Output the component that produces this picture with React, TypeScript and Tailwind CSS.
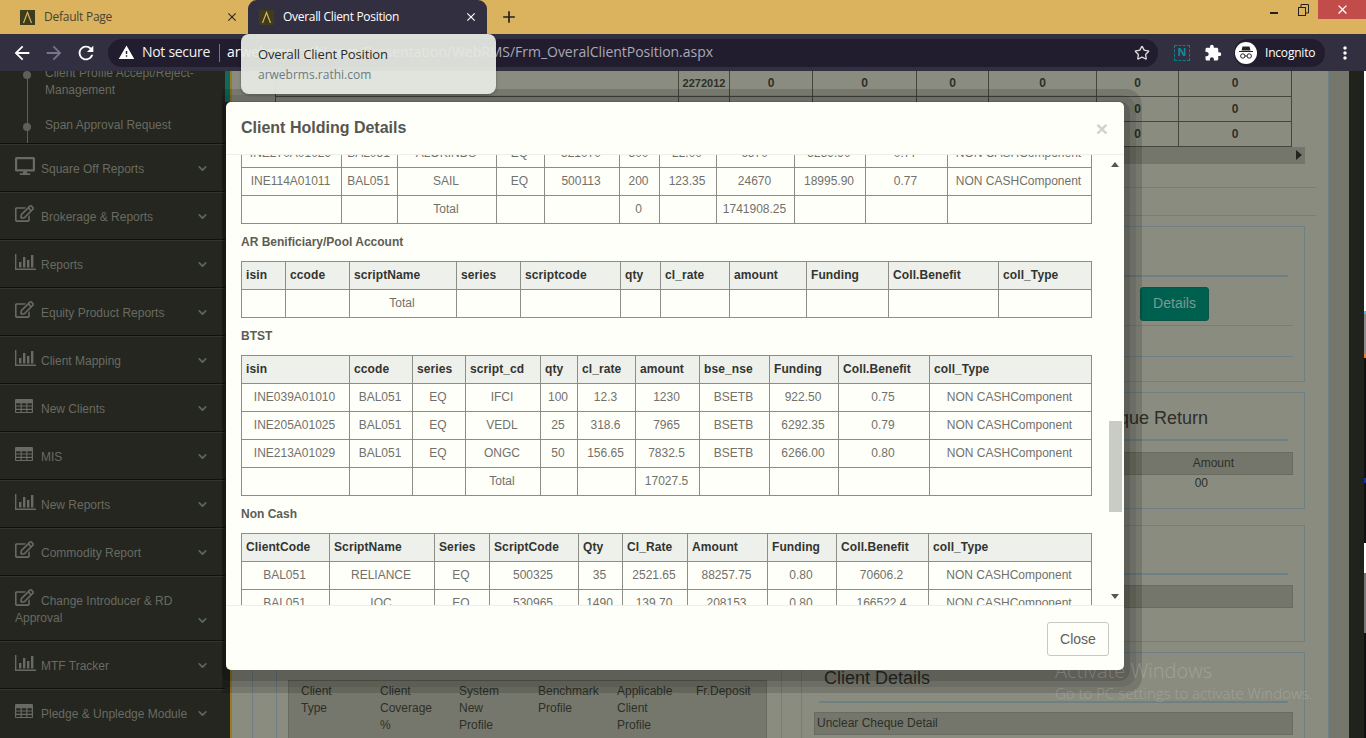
import type { ReactNode } from 'react';
import { ChevronDown, Star } from 'lucide-react';
import { FaDesktop, FaRegEdit } from 'react-icons/fa';
import { MdAdd, MdArrowBack, MdArrowForward, MdClose, MdExtension, MdMoreVert, MdRefresh, MdWarning } from 'react-icons/md';

const NC = 'NON CASHComponent';

const tables = [
  {
    cols: [100, 56, 99, 48, 75, 40, 57, 78, 71, 82, 144],
    head: [],
    rows: [
      ['INE270A01029', 'BAL051', 'ALOKINDS', 'EQ', '521070', '300', '22.00', '6570', '5289.90', '0.77', NC],
      ['INE114A01011', 'BAL051', 'SAIL', 'EQ', '500113', '200', '123.35', '24670', '18995.90', '0.77', NC],
      ['', '', 'Total', '', '', '0', '', '1741908.25', '', '', ''],
    ],
  },
  {
    title: 'AR Benificiary/Pool Account',
    cols: [44, 64, 107, 64, 100, 40, 69, 77, 82, 110, 93],
    head: ['isin', 'ccode', 'scriptName', 'series', 'scriptcode', 'qty', 'cl_rate', 'amount', 'Funding', 'Coll.Benefit', 'coll_Type'],
    rows: [['', '', 'Total', '', '', '', '', '', '', '', '']],
  },
  {
    title: 'BTST',
    cols: [108, 63, 53, 75, 37, 58, 64, 70, 69, 91, 162],
    head: ['isin', 'ccode', 'series', 'script_cd', 'qty', 'cl_rate', 'amount', 'bse_nse', 'Funding', 'Coll.Benefit', 'coll_Type'],
    rows: [
      ['INE039A01010', 'BAL051', 'EQ', 'IFCI', '100', '12.3', '1230', 'BSETB', '922.50', '0.75', NC],
      ['INE205A01025', 'BAL051', 'EQ', 'VEDL', '25', '318.6', '7965', 'BSETB', '6292.35', '0.79', NC],
      ['INE213A01029', 'BAL051', 'EQ', 'ONGC', '50', '156.65', '7832.5', 'BSETB', '6266.00', '0.80', NC],
      ['', '', '', 'Total', '', '', '17027.5', '', '', '', ''],
    ],
  },
  {
    title: 'Non Cash',
    cols: [88, 105, 55, 89, 44, 65, 80, 69, 92, 163],
    head: ['ClientCode', 'ScriptName', 'Series', 'ScriptCode', 'Qty', 'Cl_Rate', 'Amount', 'Funding', 'Coll.Benefit', 'coll_Type'],
    rows: [
      ['BAL051', 'RELIANCE', 'EQ', '500325', '35', '2521.65', '88257.75', '0.80', '70606.2', NC],
      ['BAL051', 'IOC', 'EQ', '530965', '1490', '139.70', '208153', '0.80', '166522.4', NC],
    ],
  },
];

function BarsIcon() {
  return (
    <svg width="21" height="16" viewBox="0 0 21 16" fill="currentColor">
      <path d="M0 0h1.4v14.6H21V16H0z" />
      <rect x="4" y="8" width="2.4" height="5.5" />
      <rect x="8" y="3" width="2.4" height="10.5" />
      <rect x="12" y="6" width="2.4" height="7.5" />
      <rect x="16" y="1" width="2.4" height="12.5" />
    </svg>
  );
}

function GridIcon() {
  return (
    <svg width="18" height="14" viewBox="0 0 18 14" fill="currentColor">
      <path
        fillRule="evenodd"
        d="M1 0h16a1 1 0 0 1 1 1v12a1 1 0 0 1-1 1H1a1 1 0 0 1-1-1V1a1 1 0 0 1 1-1zM1.2 4.2v2.3h4.4V4.2zm5.6 0v2.3h4.4V4.2zm5.6 0v2.3h4.4V4.2zM1.2 7.6v2.2h4.4V7.6zm5.6 0v2.2h4.4V7.6zm5.6 0v2.2h4.4V7.6zM1.2 10.9v2h4.4v-2zm5.6 0v2h4.4v-2zm5.6 0v2h4.4v-2z"
      />
    </svg>
  );
}

const menu = [
  { label: 'Square Off Reports', icon: <FaDesktop size={20} /> },
  { label: 'Brokerage & Reports', icon: <FaRegEdit size={19} /> },
  { label: 'Reports', icon: <BarsIcon /> },
  { label: 'Equity Product Reports', icon: <FaRegEdit size={19} /> },
  { label: 'Client Mapping', icon: <BarsIcon /> },
  { label: 'New Clients', icon: <GridIcon /> },
  { label: 'MIS', icon: <GridIcon /> },
  { label: 'New Reports', icon: <BarsIcon /> },
  { label: 'Commodity Report', icon: <FaRegEdit size={19} /> },
  { label: 'Change Introducer & RD', more: 'Approval', icon: <FaRegEdit size={19} /> },
  { label: 'MTF Tracker', icon: <BarsIcon /> },
  { label: 'Pledge & Unpledge Module', icon: <GridIcon /> },
];

function Logo() {
  return (
    <svg width="15" height="15" viewBox="0 0 15 15" className="shrink-0">
      <rect width="15" height="15" fill="#3d3c1c" />
      <path d="M3.5 13 7.5 2.5 11.5 13" fill="none" stroke="#d9b25c" strokeWidth="1.2" />
    </svg>
  );
}

function BrowserBar() {
  return (
    <>
      <div className="flex h-[34px] items-start bg-[#dbb25e] pl-[20px]">
        <div className="flex h-[34px] w-[228px] items-center pr-[9px]">
          <Logo />
          <span className="ml-[9px] text-[12px] tracking-[-0.25px] text-[#4a4430]">Default Page</span>
          <MdClose size={14} className="ml-auto text-[#2b2b2b]" />
        </div>
        <div className="flex h-[34px] w-[239px] items-center rounded-t-[9px] bg-[#322f40] pl-[11px] pr-[9px]">
          <Logo />
          <span className="ml-[9px] text-[12px] tracking-[-0.3px] text-white">Overall Client Position</span>
          <MdClose size={14} className="ml-auto text-white" />
        </div>
        <MdAdd size={20} className="ml-[12px] mt-[7px] text-[#222]" />
        <div className="ml-auto flex items-start">
          <div className="mt-[12px] h-[2px] w-[8px] bg-[#222]" />
          <svg width="11" height="12" viewBox="0 0 11 12" fill="none" stroke="#222" className="ml-[20px] mt-[4px]">
            <rect x="0.5" y="3.5" width="7" height="8" />
            <path d="M3 3V.5h7.5V9H8" />
          </svg>
          <div className="ml-[9px] flex h-[19px] w-[48px] items-center justify-center bg-[#c14c4a]">
            <MdClose size={15} className="text-white" />
          </div>
        </div>
      </div>
      <div className="flex h-[37px] items-center bg-[#322f40] pl-[11px]">
        <MdArrowBack size={22} className="text-white" />
        <MdArrowForward size={22} className="ml-[10px] text-[#77758a]" />
        <MdRefresh size={22} className="ml-[10px] text-white" />
        <div className="ml-[11px] flex h-[28px] w-[1050px] items-center rounded-full bg-[#211d2f] pl-[10px]">
          <MdWarning size={17} className="text-white" />
          <span className="ml-[7px] pb-[2px] text-[14px] tracking-[-0.3px] text-[#f0f0f0]">Not secure</span>
          <div className="ml-[9px] h-[18px] w-px bg-[#77758a]" />
          <span className="ml-[7px] pb-[2px] text-[14px] tracking-[-0.03px] text-[#a9a8b4]">
            <span className="text-white">arwebrms.rathi.com</span>/Presentation/WebRMS/Frm_OveralClientPosition.aspx
          </span>
          <Star size={16} className="ml-auto mr-[8px] text-[#dcdcdc]" />
        </div>
        <div className="ml-[16px] flex h-[16px] w-[16px] items-center justify-center border border-dashed border-[#0f7f8c] text-[11px] font-bold text-[#0f8c9a]">N</div>
        <MdExtension size={18} className="ml-[14px] text-white" />
        <div className="ml-[12px] flex h-[28px] w-[91px] items-center rounded-full bg-[#211d2f] pl-[1px]">
          <div className="flex h-[22px] w-[22px] items-center justify-center rounded-full bg-white">
            <svg width="16" height="16" viewBox="0 0 16 16" fill="#222">
              <path d="M4.5 1.5h7l1 4h-9zM1 6h14v1H1z" />
              <circle cx="4.8" cy="11" r="2.2" fill="none" stroke="#222" strokeWidth="1" />
              <circle cx="11.2" cy="11" r="2.2" fill="none" stroke="#222" strokeWidth="1" />
              <path d="M7 10.5h2v1H7z" />
            </svg>
          </div>
          <span className="ml-[8px] text-[12px] tracking-[-0.2px] text-white">Incognito</span>
        </div>
        <MdMoreVert size={20} className="ml-[10px] text-white" />
      </div>
    </>
  );
}

function Sidebar() {
  return (
    <aside className="w-[225px] shrink-0 overflow-hidden bg-[#24261f] font-['Liberation_Sans',sans-serif] text-[12px] text-[#696b62]">
      <div className="relative flow-root h-[72px] pl-[45px] leading-[17px]">
        <div className="absolute bottom-0 left-[27px] top-0 w-px bg-[#5e6058]" />
        <div className="absolute left-[23px] top-[0px] h-[8px] w-[8px] rounded-full bg-[#5e6058]" />
        <div className="absolute left-[23px] top-[52px] h-[8px] w-[8px] rounded-full bg-[#5e6058]" />
        <div className="-mt-[6px]">Client Profile Accept/Reject-</div>
        <div>Management</div>
        <div className="mt-[18px]">Span Approval Request</div>
      </div>
      {menu.map((item) => (
        <div
          key={item.label}
          className={`flex justify-between border-t border-t-[#10110d] pl-[15px] pr-[16px] shadow-[inset_0_1px_0_#34362e] ${item.more ? 'h-[65px] items-end pb-[13px]' : 'h-[48px] items-center pt-[2px]'}`}
        >
          <div className={item.more ? 'leading-[17px]' : 'flex items-center'}>
            <span className={item.more ? 'mr-[7px] inline-block w-[19px] align-[-2px]' : 'mr-[7px] -mt-[6px] block w-[19px]'}>{item.icon}</span>
            {item.label}
            {item.more ? <div>{item.more}</div> : null}
          </div>
          <ChevronDown size={13} strokeWidth={3} className="text-[#5c6866]" />
        </div>
      ))}
    </aside>
  );
}

function Panel({ className, children }: { className: string; children?: ReactNode }) {
  return <div className={`border border-[#6f8084] ${className}`}>{children}</div>;
}

function PageBehind() {
  const zeroRows = [0, 1, 2];
  return (
    <main className="flex min-w-0 flex-1 bg-[#8a8c80] font-['Liberation_Sans',sans-serif] text-[12px] text-[#2d2f28]">
      <div className="w-[5px] shrink-0 bg-[#24261f]">
        <div className="h-[31px] bg-[#0d6a5c]" />
      </div>
      <div className="w-[2px] shrink-0 bg-[#9c7a22]" />
      <div className="w-[1096px] shrink-0">
        <table className="ml-[43px] w-[1016px] table-fixed border-collapse font-bold">
          <colgroup>
            {[403, 51, 83, 104, 72, 108, 82, 113].map((w, i) => (
              <col key={i} width={w} />
            ))}
          </colgroup>
          <tbody>
            {zeroRows.map((row) => (
              <tr key={row} className="h-[25px]">
                <td className="border-x border-b border-[#45473f]" />
                <td className="border border-t-0 border-[#45473f] text-center text-[11px]">{row === 0 ? '2272012' : ''}</td>
                {[0, 1, 2, 3, 4, 5].map((c) => (
                  <td key={c} className="border border-t-0 border-[#45473f] text-center">0</td>
                ))}
              </tr>
            ))}
          </tbody>
        </table>
        <div className="ml-[43px] flex h-[17px] w-[1030px] items-center justify-end bg-[#74766b] pr-[3px]">
          <div className="h-0 w-0 border-y-[5px] border-l-[6px] border-y-transparent border-l-[#23251f]" />
        </div>
        <div className="ml-[43px] mt-[23px] h-px w-[1041px] bg-[#6f8084]" />
        <div className="ml-[43px] mt-[27px] h-px w-[1041px] bg-[#6f8084]" />
        <div className="mt-[10px] flex">
          <div className="ml-[20px] w-[530px] shrink-0 border-x border-[#6f8084] pl-[23px]">
            <div className="border-l border-[#6f8084] pl-[11px] pt-[454px]">
              <div className="grid h-[60px] w-[479px] grid-cols-[repeat(6,79px)] border border-[#696b60] bg-[#75776c] pl-[12px] pt-[2px] leading-[17px]">
                <div>Client<br />Type</div>
                <div>Client<br />Coverage<br />%</div>
                <div>System<br />New<br />Profile</div>
                <div>Benchmark<br />Profile</div>
                <div>Applicable<br />Client<br />Profile</div>
                <div>Fr.Deposit</div>
              </div>
            </div>
          </div>
          <div className="ml-[19px] w-[504px] shrink-0">
            <Panel className="h-[156px]">
              <div className="ml-[17px] mt-[48px] h-[2px] w-[469px] bg-[#6f8084]" />
              <button className="ml-[338px] mt-[10px] block h-[34px] w-[69px] rounded-[3px] border border-[#0b5548] bg-[#00604f] text-[14px] text-[#7b9a90]">Details</button>
              <div className="ml-[12px] mt-[4px] h-px w-[479px] bg-[#6f8084]" />
              <div className="ml-[12px] mt-[30px] h-px w-[479px] bg-[#6f8084]" />
            </Panel>
            <Panel className="mt-[10px] h-[117px]">
              <div className="mt-[12px] pr-[96px] text-right text-[18px] leading-[26px]">Unclear Cheque Return</div>
              <div className="ml-[17px] mt-[8px] h-[2px] w-[469px] bg-[#6f8084]" />
              <div className="ml-[12px] mt-[11px] flex h-[23px] w-[479px] items-center justify-end border border-[#696b60] bg-[#74766b] pr-[58px]">Amount</div>
              <div className="mt-[1px] pr-[96px] text-right leading-[14px]">00</div>
            </Panel>
            <Panel className="mt-[16px] h-[117px]">
              <div className="ml-[17px] mt-[47px] h-[2px] w-[469px] bg-[#6f8084]" />
              <div className="ml-[12px] mt-[10px] h-[23px] w-[479px] border border-[#696b60] bg-[#74766b]" />
            </Panel>
            <Panel className="mt-[10px] h-[120px]">
              <div className="ml-[22px] mt-[12px] text-[18px] leading-[26px]">Client Details</div>
              <div className="ml-[17px] mt-[10px] h-[2px] w-[469px] bg-[#6f8084]" />
              <div className="ml-[12px] mt-[9px] flex h-[23px] w-[479px] items-center border border-[#696b60] bg-[#74766b] pl-[2px]">Unclear Cheque Detail</div>
            </Panel>
          </div>
        </div>
      </div>
      <div className="w-[21px] shrink-0 border-l border-[#6f8084] bg-[#75776c]" />
      <div className="w-[15px] shrink-0 bg-[#20231b]" />
      <div className="flex w-[2px] shrink-0 flex-col bg-[#111]">
        <div className="h-[240px] bg-white" />
        <div className="h-[3px] bg-[#2fd0f0]" />
        <div className="h-[40px] bg-[#8d8d8d]" />
        <div className="h-[4px] bg-[#f0802a]" />
        <div className="mt-[120px] h-[5px] bg-[#1533a0]" />
        <div className="mt-[60px] h-[30px] bg-white" />
        <div className="h-[60px] bg-[#777]" />
      </div>
    </main>
  );
}

function HoldingTable({ cols, head, rows }: { cols: number[]; head: string[]; rows: string[][] }) {
  return (
    <table className="w-[850px] table-fixed border-collapse">
      <colgroup>
        {cols.map((w, i) => (
          <col key={i} width={w} />
        ))}
      </colgroup>
      <tbody>
        {head.length > 0 ? (
          <tr className="h-[28px] bg-[#edf0eb]">
            {head.map((h) => (
              <th key={h} className="border border-[#8d8d85] px-[4px] pb-[2px] text-left font-bold tracking-[0.1px] text-[#333430]">{h}</th>
            ))}
          </tr>
        ) : null}
        {rows.map((row, r) => (
          <tr key={r} className="h-[28px]">
            {row.map((cell, c) => (
              <td key={c} className="border border-[#8d8d85] pb-[2px] pl-[1px] pr-[3px] text-center text-[#71716b]">{cell}</td>
            ))}
          </tr>
        ))}
      </tbody>
    </table>
  );
}

function HoldingModal() {
  return (
    <div className="absolute left-[226px] top-[102px] flex h-[568px] w-[898px] flex-col rounded-[5px] bg-[#fffffa] font-['Liberation_Sans',sans-serif] text-[12px] shadow-[0_5px_0_6px_rgba(0,0,0,0.13),0_5px_0_12px_rgba(0,0,0,0.08),0_5px_0_18px_rgba(0,0,0,0.14)] [clip-path:inset(-13px_-18px_-23px_-4px)]">
      <div className="flex h-[53px] shrink-0 items-center justify-between border-b border-[#eeeeea] pl-[15px] pr-[16px]">
        <h4 className="text-[16px] font-bold text-[#55564f]">Client Holding Details</h4>
        <span className="text-[21px] font-bold leading-none text-[#d2d3cc]">×</span>
      </div>
      <div className="relative h-[450px] overflow-hidden pl-[15px]">
        <div className="-mt-[16px]">
          {tables.map((t, i) => (
            <div key={i}>
              {t.title ? (
                <div className="flex h-[37px] items-center pb-[2px] font-bold text-[#5c5d55]">{t.title}</div>
              ) : null}
              <HoldingTable cols={t.cols} head={t.head} rows={t.rows} />
            </div>
          ))}
        </div>
        <div className="absolute right-[5px] top-[7px] h-0 w-0 border-x-[4px] border-b-[5px] border-x-transparent border-b-[#55564f]" />
        <div className="absolute right-[2px] top-[266px] h-[91px] w-[13px] bg-[#c9ccc4]" />
        <div className="absolute bottom-[6px] right-[5px] h-0 w-0 border-x-[4px] border-t-[5px] border-x-transparent border-t-[#55564f]" />
      </div>
      <div className="flex flex-1 items-start justify-end border-t border-[#eeeeea] pr-[15px] pt-[16px]">
        <button className="h-[34px] w-[62px] rounded-[3px] border border-[#c8c9c2] text-[14px] text-[#5f6058]">Close</button>
      </div>
    </div>
  );
}

export default function App() {
  return (
    <div className="relative h-[738px] w-[1366px] overflow-hidden font-['Open_Sans',sans-serif]">
      <BrowserBar />
      <div className="flex h-[667px]">
        <Sidebar />
        <PageBehind />
      </div>
      <HoldingModal />
      {/* tab hover card */}
      <div className="absolute left-[241px] top-[34px] h-[60px] w-[255px] rounded-[8px] bg-[#e6eae2]/[0.94] pl-[17px] pt-[11px] shadow-[0_1px_3px_rgba(0,0,0,0.3)]">
        <div className="text-[13px] leading-[18px] tracking-[-0.15px] text-[#2b2b2b]">Overall Client Position</div>
        <div className="mt-[3px] text-[12px] leading-[18px] text-[#6c7a80]">arwebrms.rathi.com</div>
      </div>
      {/* windows watermark */}
      <div className="pointer-events-none absolute left-[1055px] top-[658px] font-light text-white/20">
        <div className="text-[20px] leading-[26px]">Activate Windows</div>
        <div className="text-[15px] leading-[19px]">Go to PC settings to activate Windows.</div>
      </div>
    </div>
  );
}
